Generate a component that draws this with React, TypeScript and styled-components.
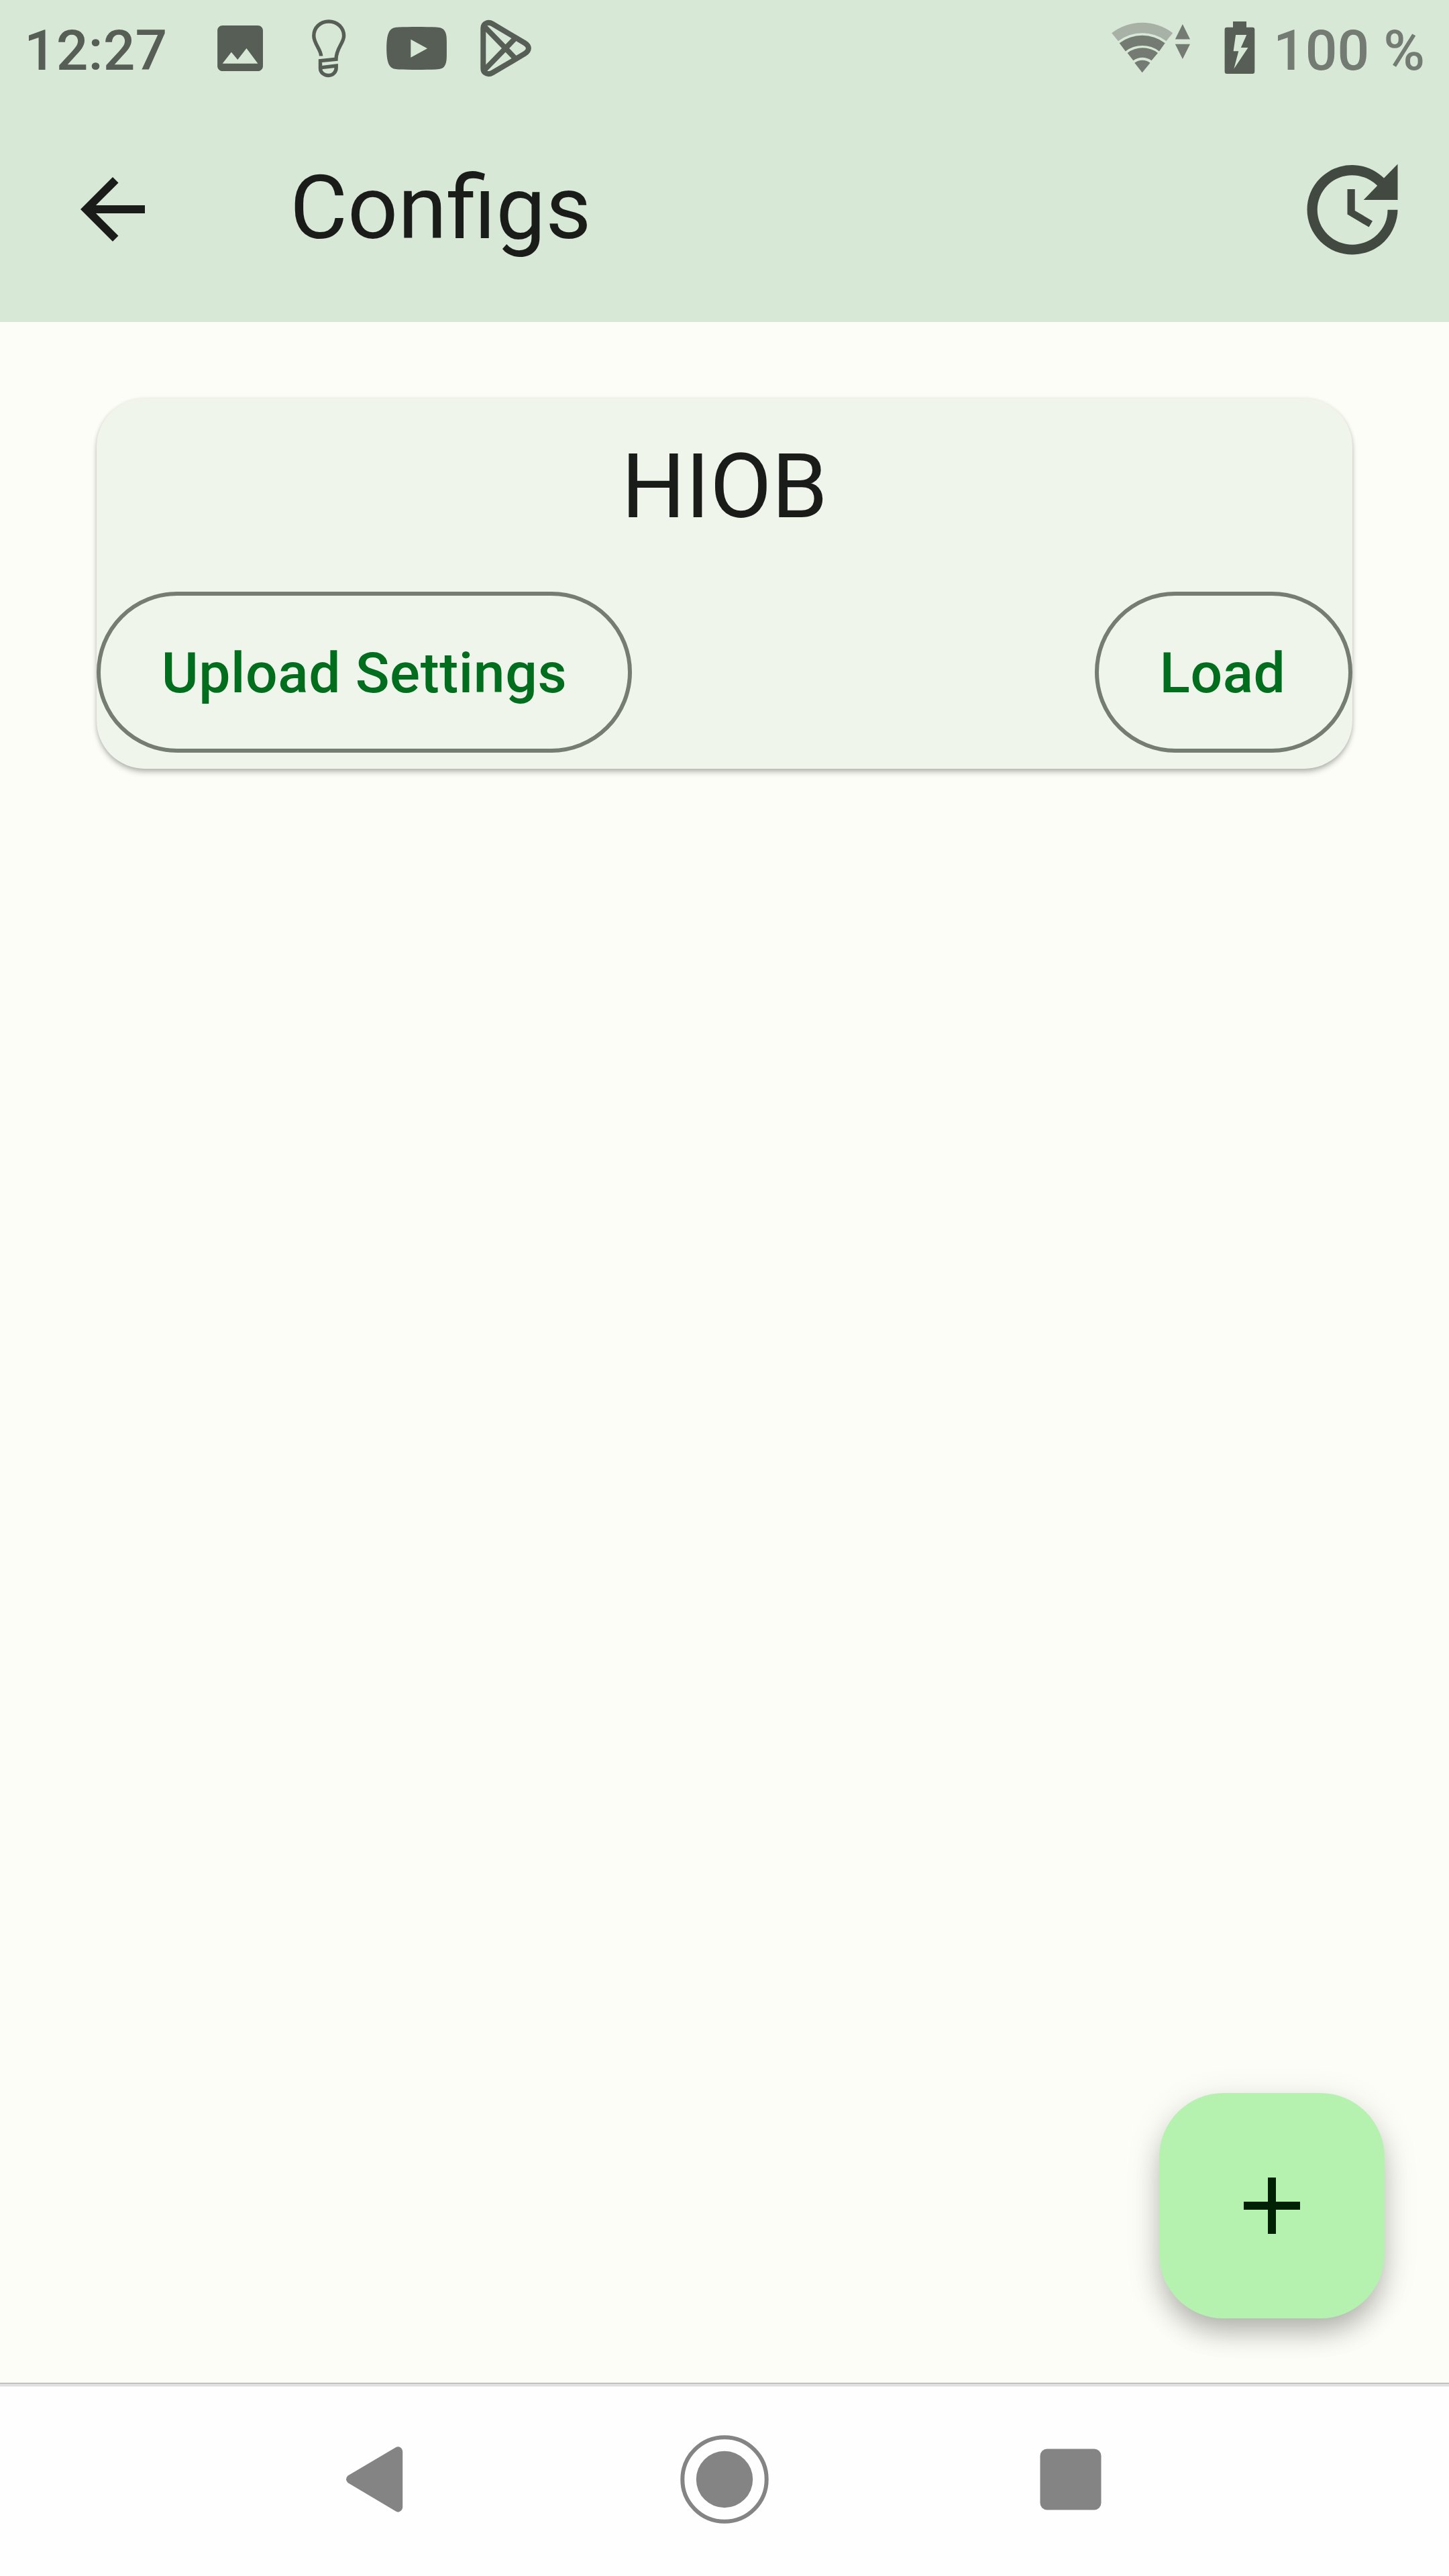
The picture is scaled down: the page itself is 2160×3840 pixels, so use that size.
import React from "react";
import styled, { createGlobalStyle } from "styled-components";

const color = {
  bar: "#d8e8d6",
  surface: "#fcfdf6",
  card: "#eff5eb",
  onSurface: "#1a1c19",
  onSurfaceVariant: "#424940",
  outline: "#757c72",
  primary: "#006e1c",
  fab: "#b6f2af",
  onFab: "#002204",
  statusDark: "#575e56",
  statusMid: "#737b72",
  statusLight: "#a7b1a6",
  nav: "#848484",
};

const GlobalStyle = createGlobalStyle`
  *, *::before, *::after { box-sizing: border-box; }
  html, body { margin: 0; padding: 0; background: ${color.surface}; }
  body { font-family: Roboto, "Liberation Sans", sans-serif; }
  svg { display: block; flex: none; }
`;

const Screen = styled.div`
  width: 2160px;
  height: 3840px;
  display: flex;
  flex-direction: column;
  background: ${color.surface};
  color: ${color.onSurface};
  overflow: hidden;
`;

const Header = styled.header`
  height: 480px;
  flex: none;
  background: ${color.bar};
`;

const StatusBar = styled.div`
  height: 144px;
  display: flex;
  justify-content: space-between;
  padding: 0 36px;
`;

const StatusGroup = styled.div`
  display: flex;
  height: 144px;
`;

const StatusText = styled.span<{ $tone: string; $width: number; $end?: boolean }>`
  width: ${(p) => p.$width}px;
  text-align: ${(p) => (p.$end ? "right" : "left")};
  font-size: 84px;
  font-weight: 500;
  line-height: 151px;
  white-space: nowrap;
  color: ${(p) => p.$tone};
`;

const AppBar = styled.div`
  height: 336px;
  display: flex;
  align-items: center;
  padding: 0 54px 0 96px;
`;

const IconButton = styled.button`
  display: flex;
  padding: 0;
  border: 0;
  background: none;
  color: inherit;
`;

const Title = styled.h1`
  flex: 1;
  margin: 0 0 0 192px;
  padding-bottom: 5px;
  font-size: 132px;
  font-weight: 400;
  line-height: 168px;
`;

const Content = styled.main`
  flex: 1;
  display: flex;
  flex-direction: column;
  justify-content: space-between;
  padding: 114px 96px 96px 144px;
`;

const Card = styled.section`
  width: 1872px;
  height: 552px;
  padding-top: 48px;
  border-radius: 72px;
  background: ${color.card};
  box-shadow: 0 6px 8px -1px rgba(0, 0, 0, 0.24), 0 1px 6px rgba(0, 0, 0, 0.12);
`;

const CardTitle = styled.h2`
  margin: 0;
  height: 168px;
  font-size: 134px;
  font-weight: 400;
  line-height: 168px;
  text-align: center;
`;

const CardActions = styled.div`
  display: flex;
  justify-content: space-between;
  margin-top: 72px;
`;

const OutlinedButton = styled.button<{ $width: number; $inset?: number }>`
  width: ${(p) => p.$width}px;
  height: 240px;
  padding: 3px ${(p) => p.$inset ?? 0}px 0 0;
  border: 6px solid ${color.outline};
  border-radius: 120px;
  background: transparent;
  color: ${color.primary};
  font-family: inherit;
  font-size: 84px;
  font-weight: 500;
  letter-spacing: 0.6px;
  line-height: 120px;
  white-space: nowrap;
`;

const Fab = styled.button`
  align-self: flex-end;
  display: flex;
  align-items: center;
  justify-content: center;
  width: 336px;
  height: 336px;
  padding: 0;
  border: 0;
  border-radius: 96px;
  background: ${color.fab};
  color: ${color.onFab};
  box-shadow: 0 24px 40px -6px rgba(0, 0, 0, 0.24), 0 12px 54px rgba(0, 0, 0, 0.12);
`;

const NavBar = styled.nav`
  height: 288px;
  flex: none;
  display: flex;
  justify-content: center;
  background: linear-gradient(#a2a2a2 0 1px, #dfdfdf 1px 5px, #efefef 5px 6px, #fefefe 6px);
`;

const MaterialIcon = ({ size, d }: { size: number; d: string }) => (
  <svg width={size} height={size} viewBox="0 0 24 24" fill="currentColor">
    <path d={d} />
  </svg>
);

const PictureIcon = () => (
  <svg width="132" height="144" viewBox="292 0 132 144" fill={color.statusDark}>
    <path
      transform="translate(312.8 26.8) scale(3.77)"
      d="M21 19V5c0-1.1-.9-2-2-2H5c-1.1 0-2 .9-2 2v14c0 1.1.9 2 2 2h14c1.1 0 2-.9 2-2zM8.5 13.5l2.5 3.01L14.5 12l4.5 6H5l3.5-4.5z"
    />
  </svg>
);

const BulbIcon = () => (
  <svg width="132" height="144" viewBox="424 0 132 144" fill="none" stroke={color.statusDark} strokeWidth="5.4">
    <path d="M478.6 83.5C478.6 74 467.8 65 467.8 53.5C467.8 41 477.5 32 490 32S512.6 41 512.6 53.5C512.6 64 501 72 501 88.2L477.5 90.6V102C477.5 108 483 112.5 489.8 112.5C496.5 112.5 501.2 107 501.2 101V98.1L479.5 100.6" />
  </svg>
);

const VideoIcon = () => (
  <svg width="132" height="144" viewBox="556 0 132 144" fill={color.statusDark}>
    <path
      fillRule="evenodd"
      d="M576.2 72C576.2 60 577.5 50 581.5 45.3C584.5 41.6 588.5 40.9 594 40.6C610 39.9 634 39.9 650 40.6C656 40.9 660 42 662.5 45.5C665.6 49.8 665.9 56 665.9 62V82C665.9 88 665.6 94.5 662.5 98.8C660 102.2 656 103.2 650 103.5C634 104.1 610 104.1 594 103.5C588.5 103.2 584.5 102.5 581.5 98.8C577.5 94 576.2 84 576.2 72ZM612.3 58.8V85.7L637 72.3Z"
    />
  </svg>
);

const PlayStoreIcon = () => (
  <svg width="132" height="144" viewBox="688 0 132 144" fill="none" stroke={color.statusDark} strokeWidth="8">
    <path d="M720.3 42C720.3 34.5 728 32 734 35.5L782 64C789.8 68.8 789.8 75.4 782 80.2L734 108.5C728 112 720.3 109.5 720.3 102Z" />
    <path d="M721 38.5L768.5 87.5M721 105.5L768.5 56.5" />
  </svg>
);

const WifiIcon = () => (
  <svg width="148" height="144" viewBox="1640 0 148 144" fill={color.statusMid}>
    <path
      fill={color.statusLight}
      d="M1657.2 49.3A74.6 74.6 0 0 1 1748.2 49.3L1738.5 61.3A59.3 59.3 0 0 0 1666.9 61.3Z"
    />
    <path d="M1668.7 64.3A56.3 56.3 0 0 1 1736.7 64.3L1728 76.5A41 41 0 0 0 1677.8 76.5Z" />
    <path d="M1680.6 79A37.6 37.6 0 0 1 1726 79L1716.5 90.2A22.6 22.6 0 0 0 1689.4 90.2Z" />
    <path d="M1691.3 93.7A18.6 18.6 0 0 1 1714.5 93.7L1702.7 108.3Z" />
    <path d="M1762.9 36L1774 58.5H1751.8ZM1751.8 65.8H1774L1762.9 88Z" />
  </svg>
);

const BatteryIcon = () => (
  <svg width="104" height="144" viewBox="1788 0 104 144" fill={color.statusDark}>
    <path
      fillRule="evenodd"
      d="M1838 32H1858V40.7H1867Q1870.3 40.7 1870.3 44V106.5Q1870.3 110 1867 110H1829Q1825.6 110 1825.6 106.5V44Q1825.6 40.7 1829 40.7H1838ZM1842.1 51.9L1838.6 76.3H1846.3L1839.4 102.5L1860.5 71H1849.8L1858.3 51.9Z"
    />
  </svg>
);

const BackIcon = () => (
  <svg width="516" height="288" viewBox="306 3552 516 288" fill={color.nav}>
    <path d="M518.5 3690.5L590 3648.2Q593.5 3646 597 3648.5Q600.2 3651 600.2 3655V3737Q600.2 3741 597 3743.3Q593.5 3745.8 590 3743.6L518.5 3701Q513.5 3695.8 518.5 3690.5Z" />
  </svg>
);

const HomeIcon = () => (
  <svg width="516" height="288" viewBox="822 3552 516 288">
    <circle cx="1080" cy="3696" r="62.7" fill="none" stroke={color.nav} strokeWidth="6" />
    <circle cx="1080" cy="3696" r="42.2" fill={color.nav} />
  </svg>
);

const RecentsIcon = () => (
  <svg width="516" height="288" viewBox="1338 3552 516 288">
    <rect x="1550.5" y="3650.5" width="91" height="91" rx="10.5" fill={color.nav} />
  </svg>
);

const ARROW_BACK = "M20 11H7.83l5.59-5.59L12 4l-8 8 8 8 1.41-1.41L7.83 13H20v-2z";
const UPDATE =
  "M21,10.12H14.22L16.96,7.3C14.23,4.6 9.81,4.5 7.08,7.2C4.35,9.91 4.35,14.28 7.08,17C9.81,19.7 14.23,19.7 16.96,17C18.32,15.65 19,14.08 19,12.1H21C21,14.08 20.12,16.65 18.36,18.39C14.85,21.87 9.15,21.87 5.64,18.39C2.14,14.92 2.11,9.28 5.62,5.81C9.13,2.34 14.76,2.34 18.27,5.81L21,3V10.12M12.5,8V12.25L16,14.33L15.28,15.54L11,13V8H12.5Z";
const ADD = "M19 13h-6v6h-2v-6H5v-2h6V5h2v6h6v2z";

const ActionIcon = styled(IconButton)`
  color: ${color.onSurfaceVariant};
`;

export default function App() {
  return (
    <Screen>
      <GlobalStyle />
      <Header>
        <StatusBar>
          <StatusGroup>
            <StatusText $tone={color.statusDark} $width={256}>12:27</StatusText>
            <PictureIcon />
            <BulbIcon />
            <VideoIcon />
            <PlayStoreIcon />
          </StatusGroup>
          <StatusGroup>
            <WifiIcon />
            <BatteryIcon />
            <StatusText $tone={color.statusMid} $width={232} $end>100 %</StatusText>
          </StatusGroup>
        </StatusBar>
        <AppBar>
          <IconButton aria-label="Back">
            <MaterialIcon size={144} d={ARROW_BACK} />
          </IconButton>
          <Title>Configs</Title>
          <ActionIcon aria-label="Update">
            <MaterialIcon size={180} d={UPDATE} />
          </ActionIcon>
        </AppBar>
      </Header>
      <Content>
        <Card>
          <CardTitle>HIOB</CardTitle>
          <CardActions>
            <OutlinedButton $width={798}>Upload Settings</OutlinedButton>
            <OutlinedButton $width={384} $inset={3}>Load</OutlinedButton>
          </CardActions>
        </Card>
        <Fab aria-label="Add">
          <MaterialIcon size={144} d={ADD} />
        </Fab>
      </Content>
      <NavBar>
        <BackIcon />
        <HomeIcon />
        <RecentsIcon />
      </NavBar>
    </Screen>
  );
}
